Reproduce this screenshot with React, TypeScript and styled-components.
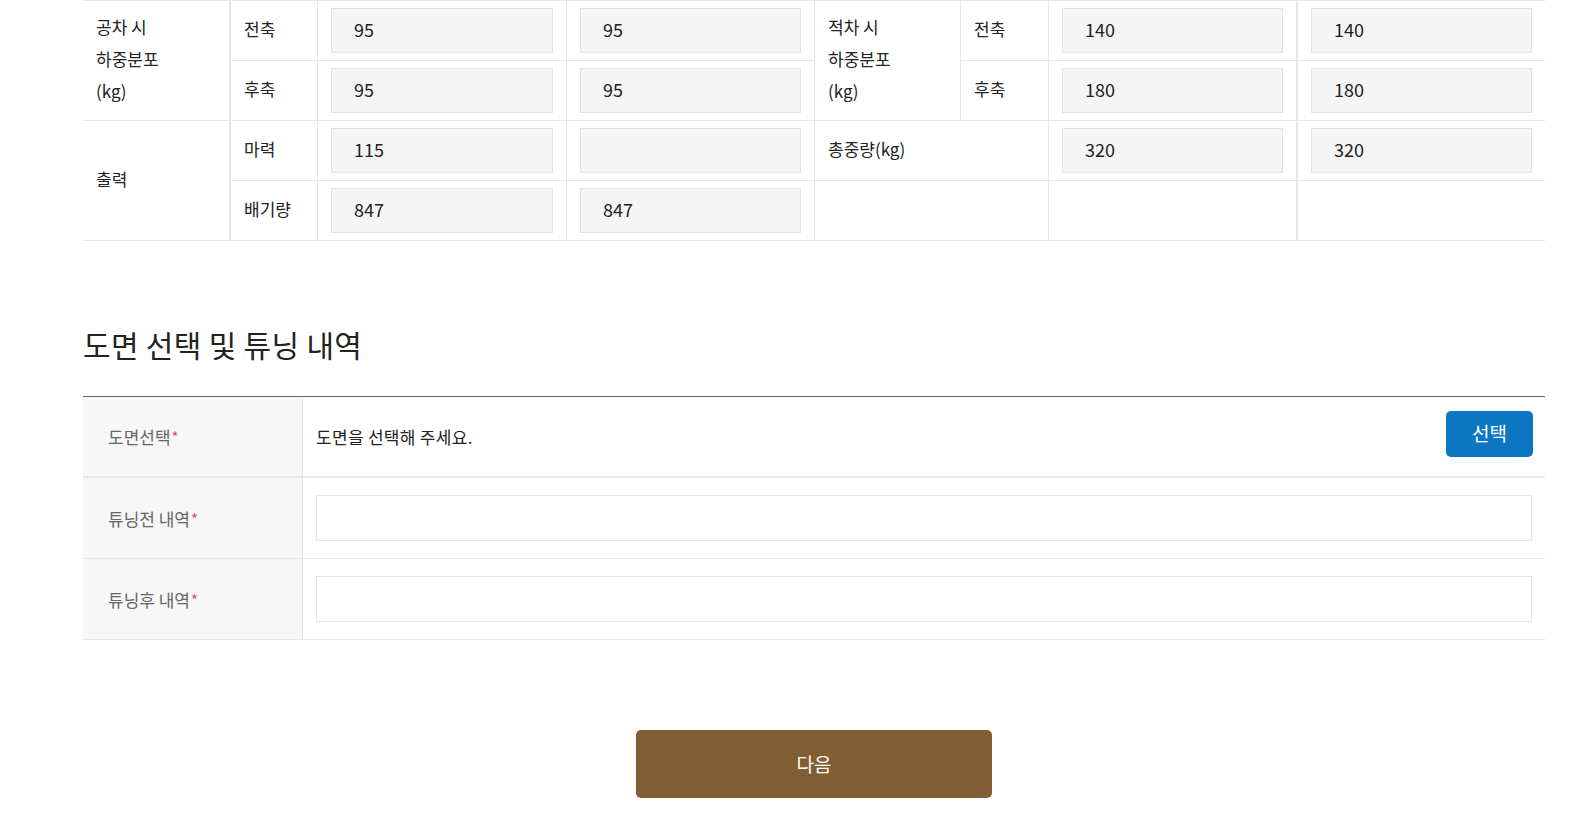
import React from "react";
import styled, { createGlobalStyle } from "styled-components";

const GlobalStyle = createGlobalStyle`
  html, body {
    margin: 0;
    padding: 0;
    background: #fff;
  }
  body {
    font-family: "Noto Sans CJK KR", "Noto Sans", sans-serif;
    color: #222;
  }
  * {
    box-sizing: border-box;
  }
`;

const Page = styled.div`
  width: 1462px;
  margin-left: 83px;
  padding-bottom: 26px;
`;

const SpecGrid = styled.div`
  display: grid;
  grid-template-columns: 146px 88px 249px 248px 146px 88px 248px 249px;
  grid-auto-rows: 60px;
  border-top: 1px solid #e5e5e5;
`;

const Cell = styled.div<{ $rows?: number; $cols?: number; $first?: boolean; $thick?: boolean }>`
  grid-row: span ${(p) => p.$rows || 1};
  grid-column: span ${(p) => p.$cols || 1};
  display: flex;
  align-items: center;
  padding: 0 13px 3px;
  border-bottom: 1px solid #e5e5e5;
  border-left: ${(p) => (p.$first ? "none" : `${p.$thick ? 2 : 1}px solid #e5e5e5`)};
  font-size: 17px;
  line-height: 32px;
  color: #222;
`;

const ValueBox = styled.input`
  width: 100%;
  height: 45px;
  margin: 3px 0 0;
  padding: 0 0 3px 22px;
  background: #f5f5f5;
  border: 1px solid #e3e3e3;
  font-family: inherit;
  font-size: 18px;
  color: #222;
  outline: none;
`;

const Heading = styled.h2`
  margin: 84px 0 33px;
  font-size: 30px;
  font-weight: 400;
  letter-spacing: 0.3px;
  line-height: 38px;
  color: #222;
`;

const FormGrid = styled.div`
  display: grid;
  grid-template-columns: 219px 1fr;
  border-top: 1px solid #666;
`;

const FormLabel = styled.div<{ $thick?: boolean }>`
  height: 81px;
  display: flex;
  align-items: center;
  padding-left: 25px;
  background: #f7f7f7;
  border-bottom: ${(p) => (p.$thick ? 2 : 1)}px solid #e8e8e8;
  font-size: 17px;
  color: #666;
`;

const Required = styled.span`
  color: #d9534f;
  font-size: 15px;
  margin-left: 1px;
`;

const FormField = styled.div<{ $thick?: boolean }>`
  display: flex;
  align-items: center;
  justify-content: space-between;
  padding: 0 12px 0 13px;
  border-left: 1px solid #e5e5e5;
  border-bottom: ${(p) => (p.$thick ? 2 : 1)}px solid #e8e8e8;
  font-size: 17px;
  letter-spacing: 0.3px;
  color: #222;
`;

const TextBox = styled.input`
  width: 100%;
  height: 46px;
  margin: 0 1px 0 0;
  border: 1px solid #e5e5e5;
  background: #fff;
  outline: none;
`;

const SelectButton = styled.button`
  width: 87px;
  height: 46px;
  margin-bottom: 6px;
  padding-bottom: 4px;
  border: none;
  border-radius: 5px;
  background: #0b77c2;
  color: #fff;
  font-family: inherit;
  font-size: 19px;
  cursor: pointer;
`;

const Actions = styled.div`
  display: flex;
  justify-content: center;
  margin-top: 90px;
`;

const NextButton = styled.button`
  width: 356px;
  height: 68px;
  padding-bottom: 3px;
  border: none;
  border-radius: 5px;
  background: #7f5f33;
  color: #fff;
  font-family: inherit;
  font-size: 19px;
  cursor: pointer;
`;

const Value = ({ v }: { v?: string }) => <ValueBox readOnly defaultValue={v || ""} />;

const Label = ({ lines }: { lines: string[] }) => (
  <div>
    {lines.map((l) => (
      <div key={l}>{l}</div>
    ))}
  </div>
);

export default function App() {
  return (
    <Page>
      <GlobalStyle />
      <SpecGrid>
        <Cell $rows={2} $first>
          <Label lines={["공차 시", "하중분포", "(kg)"]} />
        </Cell>
        <Cell $thick>전축</Cell>
        <Cell><Value v="95" /></Cell>
        <Cell><Value v="95" /></Cell>
        <Cell $rows={2}>
          <Label lines={["적차 시", "하중분포", "(kg)"]} />
        </Cell>
        <Cell>전축</Cell>
        <Cell><Value v="140" /></Cell>
        <Cell $thick><Value v="140" /></Cell>

        <Cell $thick>후축</Cell>
        <Cell><Value v="95" /></Cell>
        <Cell><Value v="95" /></Cell>
        <Cell>후축</Cell>
        <Cell><Value v="180" /></Cell>
        <Cell $thick><Value v="180" /></Cell>

        <Cell $rows={2} $first>출력</Cell>
        <Cell $thick>마력</Cell>
        <Cell><Value v="115" /></Cell>
        <Cell><Value /></Cell>
        <Cell $cols={2}>총중량(kg)</Cell>
        <Cell><Value v="320" /></Cell>
        <Cell $thick><Value v="320" /></Cell>

        <Cell $thick>배기량</Cell>
        <Cell><Value v="847" /></Cell>
        <Cell><Value v="847" /></Cell>
        <Cell $cols={2} />
        <Cell />
        <Cell $thick />
      </SpecGrid>

      <Heading>도면 선택 및 튜닝 내역</Heading>

      <FormGrid>
        <FormLabel $thick>
          도면선택<Required>*</Required>
        </FormLabel>
        <FormField $thick>
          <span>도면을 선택해 주세요.</span>
          <SelectButton>선택</SelectButton>
        </FormField>

        <FormLabel>
          튜닝전 내역<Required>*</Required>
        </FormLabel>
        <FormField>
          <TextBox />
        </FormField>

        <FormLabel>
          튜닝후 내역<Required>*</Required>
        </FormLabel>
        <FormField>
          <TextBox />
        </FormField>
      </FormGrid>

      <Actions>
        <NextButton>다음</NextButton>
      </Actions>
    </Page>
  );
}
